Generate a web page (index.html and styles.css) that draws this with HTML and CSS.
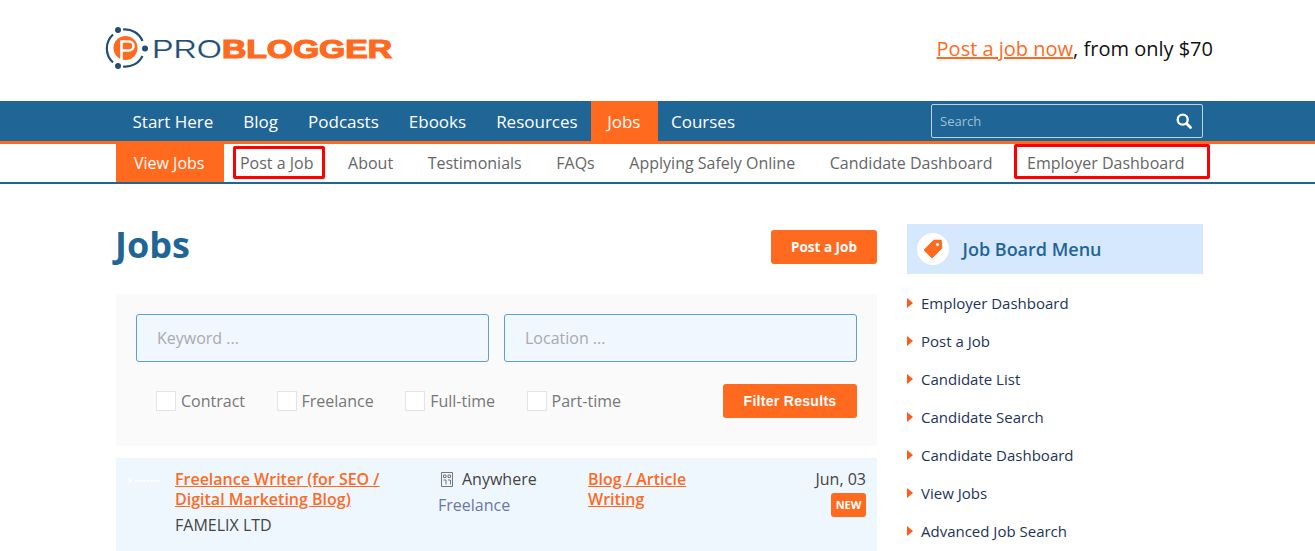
FILE: index.html
```html
<!DOCTYPE html>
<html lang="en">
<head>
<meta charset="utf-8">
<title>Jobs | ProBlogger</title>
<link rel="stylesheet" href="styles.css">
</head>
<body>
<header class="top">
  <a class="logo" href="#" aria-label="ProBlogger">
    <svg width="288" height="44" viewBox="0 0 288 44">
      <path d="M8 8.500A19 19 0 0 0 8 36.500" fill="none" stroke="#1f4e79" stroke-width="2.200"/>
      <path d="M18 3.500A19 19 0 0 1 37.500 15" fill="none" stroke="#1f4e79" stroke-width="2.200"/>
      <path d="M37.500 30A19 19 0 0 1 18 40.500" fill="none" stroke="#1f4e79" stroke-width="2.200"/>
      <circle cx="13" cy="4" r="3" fill="#1f4e79"/>
      <circle cx="13" cy="40" r="3" fill="#1f4e79"/>
      <circle cx="40" cy="22.500" r="3" fill="#1f4e79"/>
      <circle cx="20.500" cy="22" r="12" fill="#ff6a1f"/>
      <path d="M16.500 34V15.500H24A4.500 4.500 0 0 1 24 24.500H16.500" fill="none" stroke="#fff" stroke-width="2.600"/>
      <text class="logo-pro" x="47" y="32" textLength="70" lengthAdjust="spacingAndGlyphs">PRO</text>
      <text class="logo-blog" x="117" y="32" textLength="170" lengthAdjust="spacingAndGlyphs">BLOGGER</text>
    </svg>
  </a>
  <p class="promo"><a href="#">Post a job now</a>, from only $70</p>
</header>

<nav class="mainnav">
  <div class="wrap navrow">
    <a href="#">Start Here</a>
    <a href="#">Blog</a>
    <a href="#">Podcasts</a>
    <a href="#">Ebooks</a>
    <a href="#">Resources</a>
    <a href="#" class="active">Jobs</a>
    <a href="#" class="courses">Courses</a>
    <form class="search">
      <span>Search</span>
      <svg width="16" height="16" viewBox="0 0 16 16"><circle cx="6.700" cy="6.700" r="5" fill="none" stroke="#fff" stroke-width="2.300"/><path d="M10.500 10.500L14.500 14.500" stroke="#fff" stroke-width="2.800" stroke-linecap="round"/></svg>
    </form>
  </div>
</nav>

<nav class="subnav">
  <div class="wrap subrow">
    <a href="#" class="current">View Jobs</a>
    <a href="#" class="marked mark-post">Post a Job</a>
    <a href="#">About</a>
    <a href="#">Testimonials</a>
    <a href="#">FAQs</a>
    <a href="#">Applying Safely Online</a>
    <a href="#">Candidate Dashboard</a>
    <a href="#" class="marked mark-employer">Employer Dashboard</a>
  </div>
</nav>

<div class="wrap content">
  <main class="main">
    <div class="title-row">
      <h1>Jobs</h1>
      <a href="#" class="btn btn-post">Post a Job</a>
    </div>
    <section class="filters">
      <div class="inputs">
        <div class="input">Keyword ...</div>
        <div class="input">Location ...</div>
      </div>
      <div class="checks-row">
        <label class="check"><i></i>Contract</label>
        <label class="check"><i></i>Freelance</label>
        <label class="check"><i></i>Full-time</label>
        <label class="check"><i></i>Part-time</label>
        <a href="#" class="btn btn-filter">Filter Results</a>
      </div>
    </section>
    <article class="job">
      <div class="job-logo"><svg width="34" height="6" viewBox="0 0 34 6"><path d="M1 5L3 1L5 5M8 3H33" stroke="#fff" stroke-width="1.500" stroke-dasharray="2 1" fill="none"/></svg></div>
      <div class="job-title">
        <a href="#">Freelance Writer (for SEO / Digital Marketing Blog)</a>
        <p>FAMELIX LTD</p>
      </div>
      <div class="job-loc">
        <p class="place"><svg width="12" height="15" viewBox="0 0 12 15"><path d="M.5 .5H11.500V14.500H.5ZM2.500 3H5V5.500H2.500ZM7 3H9.500V5.500H7ZM2.500 8H5V12.500M7 8H9.500V12.500" fill="none" stroke="#777" stroke-width="1"/></svg>Anywhere</p>
        <p class="type">Freelance</p>
      </div>
      <div class="job-cat"><a href="#">Blog / Article Writing</a></div>
      <div class="job-date">
        <p>Jun, 03</p>
        <span class="new">NEW</span>
      </div>
    </article>
  </main>
  <aside class="side">
    <div class="side-head">
      <span class="tag"><svg width="20" height="20" viewBox="0 0 20 20"><path d="M11 1.500L18 1.500L18.500 9L9 18.500L1.500 11Z" fill="#ff6a1f" stroke="#ff6a1f" stroke-linejoin="round" stroke-width="1.500"/><circle cx="14.500" cy="5.500" r="1.600" fill="#fff"/></svg></span>
      <h2>Job Board Menu</h2>
    </div>
    <ul class="side-menu">
      <li><a href="#">Employer Dashboard</a></li>
      <li><a href="#">Post a Job</a></li>
      <li><a href="#">Candidate List</a></li>
      <li><a href="#">Candidate Search</a></li>
      <li><a href="#">Candidate Dashboard</a></li>
      <li><a href="#">View Jobs</a></li>
      <li><a href="#">Advanced Job Search</a></li>
    </ul>
  </aside>
</div>
</body>
</html>
```

FILE: styles.css
```css
* { box-sizing: border-box; }
html, body { height: 551px; overflow: hidden; }
body { margin: 0; background: #fff; font-family: "Open Sans", "Liberation Sans", sans-serif; color: #333; }
p, h1, h2, ul { margin: 0; padding: 0; }
a { text-decoration: none; color: inherit; }
.wrap { width: 1087px; margin-left: 116px; }

.top { height: 101px; display: flex; justify-content: space-between; padding: 26px 102px 0 105px; }
.logo { display: block; height: 44px; }
.logo-pro { font: 400 25px "Liberation Sans", sans-serif; fill: #1f4e79; stroke: #fff; stroke-width: .2px; }
.logo-blog { font: 700 25px "Liberation Sans", sans-serif; fill: #ff6a1f; stroke: #ff6a1f; stroke-width: 1.200px; }
.promo { font-size: 20px; line-height: 27px; padding-top: 9px; color: #111; }
.promo a { color: #ff6a1f; text-decoration: underline; }

.mainnav { height: 43px; background: #1f6595; border-bottom: 3px solid #ff6a1f; }
.navrow { display: flex; height: 40px; font-size: 17px; line-height: 42px; color: #fff; white-space: nowrap; }
.navrow > a { padding: 0 15px; }
.navrow > a:first-child { padding-left: 16.500px; }
.navrow .active { background: #ff6a1f; margin-left: -2px; padding: 0 17.500px 0 16.500px; }
.navrow .courses { padding-left: 13px; }
.search { margin: 3px 0 0 auto; width: 272px; height: 34px; border: 1px solid #bcd3e3; border-radius: 2px; display: flex; align-items: center; justify-content: space-between; padding: 0 10px 0 8px; font-size: 13px; line-height: 20px; color: #9fc0d8; }

.subnav { height: 40px; border-bottom: 2px solid #1f6595; }
.subrow { display: flex; height: 38px; font-size: 16px; line-height: 38px; color: #666; white-space: nowrap; }
.subrow > a { position: relative; margin-right: 34.600px; }
.subrow .current { background: #ff6a1f; color: #fff; padding: 0 20px 0 18px; margin-right: 15.500px; }
.marked::after { content: ""; position: absolute; border: 3px solid #f00; border-radius: 2px; }
.mark-post::after { left: -7px; right: -12px; top: 2px; bottom: 3px; }
.mark-employer::after { left: -13px; right: -26px; top: 0; bottom: 3px; }

.content { display: flex; justify-content: space-between; padding-top: 40px; }
.main { width: 761px; }
.title-row { display: flex; justify-content: space-between; height: 70px; }
h1 { font-size: 36px; line-height: 42px; font-weight: 700; color: #1f6595; margin-left: -1px; }
.btn { background: #ff6a1f; color: #fff; font-weight: 700; border-radius: 3px; display: flex; align-items: center; justify-content: center; }
.btn-post { width: 106px; height: 34px; margin-top: 6px; font-size: 13.500px; }
.filters { background: #fafafa; height: 152px; padding: 20px; }
.inputs { display: flex; gap: 15px; }
.input { flex: 1; height: 48px; background: #f0f7ff; border: 1px solid #5ea0d0; border-radius: 3px; padding: 0 20px; font-size: 16px; line-height: 46px; color: #aaa; }
.checks-row { display: flex; align-items: center; height: 34px; margin-top: 22px; padding-left: 20px; font-size: 16px; color: #777; }
.check { display: flex; align-items: center; gap: 5px; margin-right: 31.500px; }
.check i { width: 20px; height: 20px; background: #fff; border: 1px solid #e4e4e4; }
.btn-filter { width: 134px; height: 34px; margin-left: auto; font: 700 14px "Liberation Sans", sans-serif; letter-spacing: .3px; }

.job { display: flex; margin-top: 12px; height: 93px; background: #eff7fe; padding-top: 11px; font-size: 16px; line-height: 20px; }
.job-logo { width: 59px; padding: 9px 0 0 11px; line-height: 0; }
.job-title { width: 263px; }
.job-title a { display: block; width: 215px; }
.job-title a, .job-cat a { color: #ff6a1f; font-weight: 600; text-decoration: underline; }
.job-title p { margin-top: 6px; color: #444; }
.job-loc { width: 150px; }
.place { display: flex; align-items: center; gap: 9px; padding-left: 3px; color: #444; }
.type { margin-top: 6px; color: #6b76a8; }
.job-cat { width: 130px; }
.job-date { flex: 1; text-align: right; padding-right: 11px; color: #444; }
.new { display: inline-block; margin-top: 4px; width: 35px; height: 24px; background: #ff6a1f; border-radius: 3px; color: #fff; text-align: center; font-size: 11px; font-weight: 700; line-height: 24px; }

.side { width: 296px; }
.side-head { height: 50px; background: #d6e8fd; display: flex; align-items: center; padding-left: 10px; gap: 13.500px; }
.tag { width: 32px; height: 32px; border-radius: 50%; background: #fff; display: flex; align-items: center; justify-content: center; }
h2 { font-size: 18px; font-weight: 600; color: #1f6595; }
.side-menu { list-style: none; padding-top: 10px; font-size: 15px; }
.side-menu li { position: relative; height: 38px; line-height: 38px; padding-left: 14px; color: #1d3557; }
.side-menu li::before { content: ""; position: absolute; left: 0; top: 14px; border-left: 6px solid #ff5a1a; border-top: 5px solid transparent; border-bottom: 5px solid transparent; }
```
